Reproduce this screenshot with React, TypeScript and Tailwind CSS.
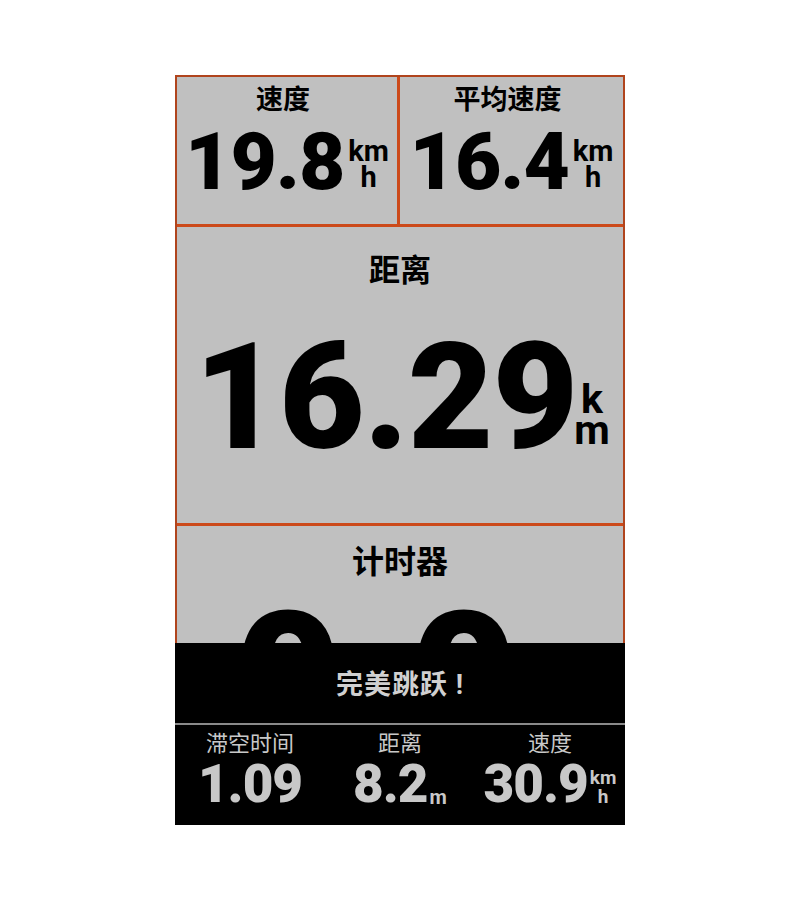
import React from "react";

const FONT = "font-['Roboto','Noto_Sans_CJK_SC',sans-serif]";

type StackProps = { top: string; bottom: string; className: string };

const UnitStack = ({ top, bottom, className }: StackProps) => (
  <span className={`flex flex-col items-center font-bold ${className}`}>
    <span>{top}</span>
    <span>{bottom}</span>
  </span>
);

const SmallField = ({ label, value }: { label: string; value: string }) => (
  <div className="flex flex-col items-center pt-[8px]">
    <div className="pr-[8px] text-[27px] leading-[30px] font-bold text-black">{label}</div>
    <div className="mt-[7px] flex items-start text-black">
      <span className="text-[80px] leading-[80px] font-black tracking-[-1px]">{value}</span>
      <UnitStack top="km" bottom="h" className="ml-[4px] mt-[16px] text-[29px] leading-[26px]" />
    </div>
  </div>
);

const JumpStat = ({ label, value, unit }: { label: string; value: string; unit?: React.ReactNode }) => (
  <div className="flex flex-col items-center pt-[6px] text-[#c8c8c8]">
    <div className="text-[22px] leading-[26px]">{label}</div>
    <div className="mt-[1px] flex items-end">
      <span className="text-[53px] leading-[53px] font-black tracking-[-1px]">{value}</span>
      {unit}
    </div>
  </div>
);

export default function App() {
  return (
    <div className={`min-h-[900px] w-full bg-white pt-[75px] ${FONT}`}>
      <div className="mx-auto flex h-[750px] w-[450px] flex-col">
        {/* data screen */}
        <div className="flex min-h-0 flex-1 flex-col border-x-2 border-t-2 border-[#b0441d] bg-[#c0c0c0]">
          <div className="grid h-[150px] shrink-0 grid-cols-2 border-b-[3px] border-[#cc4a1a]">
            <div className="border-r-[3px] border-[#cc4a1a]">
              <SmallField label="速度" value="19.8" />
            </div>
            <SmallField label="平均速度" value="16.4" />
          </div>

          <div className="flex h-[299px] shrink-0 flex-col items-center border-b-[3px] border-[#cc4a1a] pt-[27px] text-black">
            <div className="text-[31px] leading-[34px] font-bold">距离</div>
            <div className="mt-[36px] flex items-start pl-[4px]">
              <span className="text-[148px] leading-[148px] font-black tracking-[-1px]">16.29</span>
              <UnitStack top="k" bottom="m" className="-ml-[3px] mt-[60px] text-[41px] leading-[31px]" />
            </div>
          </div>

          <div className="flex min-h-0 flex-1 flex-col items-center overflow-hidden pt-[18px] text-black">
            <div className="text-[32px] leading-[36px] font-bold">计时器</div>
            <div className="mt-[6px] flex items-start gap-[68px] pr-[48px] text-[186px] leading-[186px] font-black">
              <span>0</span>
              <span>0</span>
            </div>
          </div>
        </div>

        {/* jump notification */}
        <div className="h-[182px] shrink-0 bg-black">
          <div className="flex h-[80px] items-center justify-center pt-[4px] text-[27px] font-bold tracking-[1px] text-[#d0d0d0]">
            完美跳跃 !
          </div>
          <div className="h-[2px] bg-[#8a8a8a]" />
          <div className="grid grid-cols-3">
            <JumpStat label="滞空时间" value="1.09" />
            <JumpStat
              label="距离"
              value="8.2"
              unit={<span className="mb-[4px] ml-[2px] text-[20px] leading-[20px] font-bold">m</span>}
            />
            <JumpStat
              label="速度"
              value="30.9"
              unit={<UnitStack top="km" bottom="h" className="mb-[5px] ml-[2px] text-[19px] leading-[19px]" />}
            />
          </div>
        </div>
      </div>
    </div>
  );
}
